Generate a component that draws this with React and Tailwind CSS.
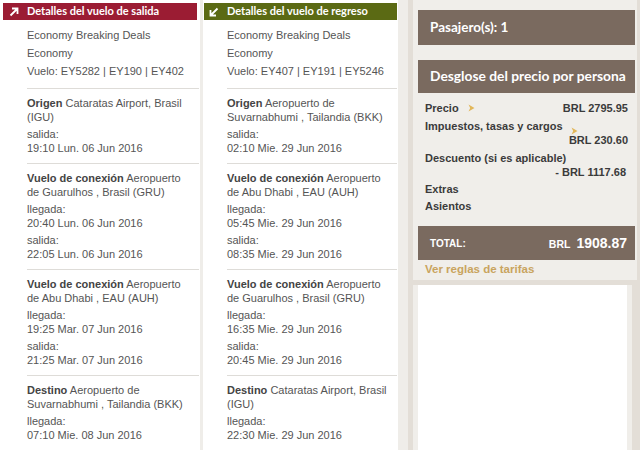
import React from 'react';

const ida = {
  titulo: 'Detalles del vuelo de salida',
  color: 'bg-[#9b1c33]',
  resumen: ['Economy Breaking Deals', 'Economy', 'Vuelo: EY5282 | EY190 | EY402'],
  tramos: [
    { tipo: 'Origen', lugar: 'Cataratas Airport, Brasil (IGU)', horas: [['salida:', '19:10 Lun. 06 Jun 2016']] },
    { tipo: 'Vuelo de conexión', lugar: 'Aeropuerto de Guarulhos , Brasil (GRU)', horas: [['llegada:', '20:40 Lun. 06 Jun 2016'], ['salida:', '22:05 Lun. 06 Jun 2016']] },
    { tipo: 'Vuelo de conexión', lugar: 'Aeropuerto de Abu Dhabi , EAU (AUH)', horas: [['llegada:', '19:25 Mar. 07 Jun 2016'], ['salida:', '21:25 Mar. 07 Jun 2016']] },
    { tipo: 'Destino', lugar: 'Aeropuerto de Suvarnabhumi , Tailandia (BKK)', horas: [['llegada:', '07:10 Mie. 08 Jun 2016']] },
  ],
};

const vuelta = {
  titulo: 'Detalles del vuelo de regreso',
  color: 'bg-[#5b6a14]',
  resumen: ['Economy Breaking Deals', 'Economy', 'Vuelo: EY407 | EY191 | EY5246'],
  tramos: [
    { tipo: 'Origen', lugar: 'Aeropuerto de Suvarnabhumi , Tailandia (BKK)', horas: [['salida:', '02:10 Mie. 29 Jun 2016']] },
    { tipo: 'Vuelo de conexión', lugar: 'Aeropuerto de Abu Dhabi , EAU (AUH)', horas: [['llegada:', '05:45 Mie. 29 Jun 2016'], ['salida:', '08:35 Mie. 29 Jun 2016']] },
    { tipo: 'Vuelo de conexión', lugar: 'Aeropuerto de Guarulhos , Brasil (GRU)', horas: [['llegada:', '16:35 Mie. 29 Jun 2016'], ['salida:', '20:45 Mie. 29 Jun 2016']] },
    { tipo: 'Destino', lugar: 'Cataratas Airport, Brasil (IGU)', horas: [['llegada:', '22:30 Mie. 29 Jun 2016']] },
  ],
};

// flechas de ida / regreso del encabezado
const Salida = () => (
  <svg width="10" height="10" viewBox="0 0 10 10" className="ml-[6px] mr-[8px]" fill="none" stroke="white" strokeWidth="1.8">
    <path d="M1.5 8.5 L8.5 1.5 M3 1.5 H8.5 V7" />
  </svg>
);

const Regreso = () => (
  <svg width="10" height="10" viewBox="0 0 10 10" className="ml-[5px] mr-[8px]" fill="none" stroke="white" strokeWidth="1.8">
    <path d="M8.5 1.5 L1.5 8.5 M1.5 3 V8.5 H7" />
  </svg>
);

const Flecha = ({ className = '' }) => (
  <svg width="7" height="8" viewBox="0 0 7 8" className={className}>
    <path d="M0.5 0.5 L6.5 4 L0.5 7.5 L2.2 4 Z" fill="#e2b75a" />
  </svg>
);

const Vuelo = ({ datos, icono, ancho, pl, header }) => (
  <div className={`${ancho} bg-white flex flex-col shrink-0`}>
    <div className={`${datos.color} ${header} h-[20px] mt-[3px] flex items-center text-white`}>
      {icono}
      <span className="font-['Lato',sans-serif] font-bold text-[11px]">{datos.titulo}</span>
    </div>
    <div className={`${pl} pr-[1px] text-[11px] text-[#555] font-['Liberation_Sans',Arial,sans-serif]`}>
      <div className="pt-[6px] pb-[8px] leading-[18px]">
        {datos.resumen.map(r => <div key={r}>{r}</div>)}
      </div>
      {datos.tramos.map((t, i) => (
        <div key={i} className="border-t border-[#dedcd8] pt-[7px] pb-[8px] leading-[14px]">
          <p className="pr-[4px]"><b className="text-[#444]">{t.tipo}</b> {t.lugar}</p>
          {t.horas.map(([etiqueta, hora]) => (
            <div key={etiqueta} className="mt-[3px]">
              <div>{etiqueta}</div>
              <div>{hora}</div>
            </div>
          ))}
        </div>
      ))}
    </div>
  </div>
);

export default function App() {
  return (
    <div className="w-[640px] h-[450px] overflow-hidden flex bg-[#efede9]">
      <Vuelo datos={ida} ancho="w-[200px]" pl="pl-[27px]" header="mx-[3px]" icono={<Salida />} />
      <div className="w-[3px] shrink-0" />
      <Vuelo datos={vuelta} ancho="w-[195px]" pl="pl-[24px]" header="mx-[1px]" icono={<Regreso />} />
      <div className="w-[10px] shrink-0" />

      {/* resumen de precio */}
      <div className="flex-1 bg-[#e3ded7] flex flex-col">
        <div className="ml-[5px] w-[224px] bg-[#f0eeea] pt-[10px] pl-[5px] pr-[2px] font-['Liberation_Sans',Arial,sans-serif]">
          <div className="h-[35px] bg-[#7a6a5f] flex items-center pl-[12px] text-white font-['Lato',sans-serif] font-bold text-[13.5px]">
            Pasajero(s): 1
          </div>
          <div className="mt-[15px] h-[33px] bg-[#7a6a5f] flex items-center pl-[12px] text-white font-['Lato',sans-serif] font-bold text-[13.8px]">
            Desglose del precio por persona
          </div>
          <div className="pt-[8px] pb-[13px] px-[7px] text-[11px] font-bold text-[#3b3b3b] leading-[14px]">
            <div className="flex justify-between">
              <span className="flex items-center">Precio<Flecha className="ml-[9px]" /></span>
              <span>BRL 2795.95</span>
            </div>
            <div className="mt-[4px] flex items-end">
              Impuestos, tasas y cargos<Flecha className="ml-[8px] mb-[-2px]" />
            </div>
            <div className="text-right">BRL 230.60</div>
            <div className="mt-[4px]">Descuento (si es aplicable)</div>
            <div className="text-right pr-[2px]">- BRL 1117.68</div>
            <div className="mt-[3px]">Extras</div>
            <div className="mt-[3px]">Asientos</div>
          </div>
          <div className="h-[34px] bg-[#7a6a5f] flex items-center justify-between pl-[12px] pr-[8px] text-white font-bold">
            <span className="text-[10px]">TOTAL:</span>
            <span className="flex items-baseline">
              <span className="text-[10.5px] mr-[6px]">BRL</span>
              <span className="text-[14px]">1908.87</span>
            </span>
          </div>
          <div className="h-[20px] flex items-center pl-[7px] text-[11.5px] font-bold text-[#c9a45e]">
            Ver reglas de tarifas
          </div>
        </div>
        <div className="mt-[5px] ml-[5px] w-[219px] flex-1 bg-[#f0eeea] px-[5px]">
          <div className="h-full bg-white" />
        </div>
      </div>
    </div>
  );
}
